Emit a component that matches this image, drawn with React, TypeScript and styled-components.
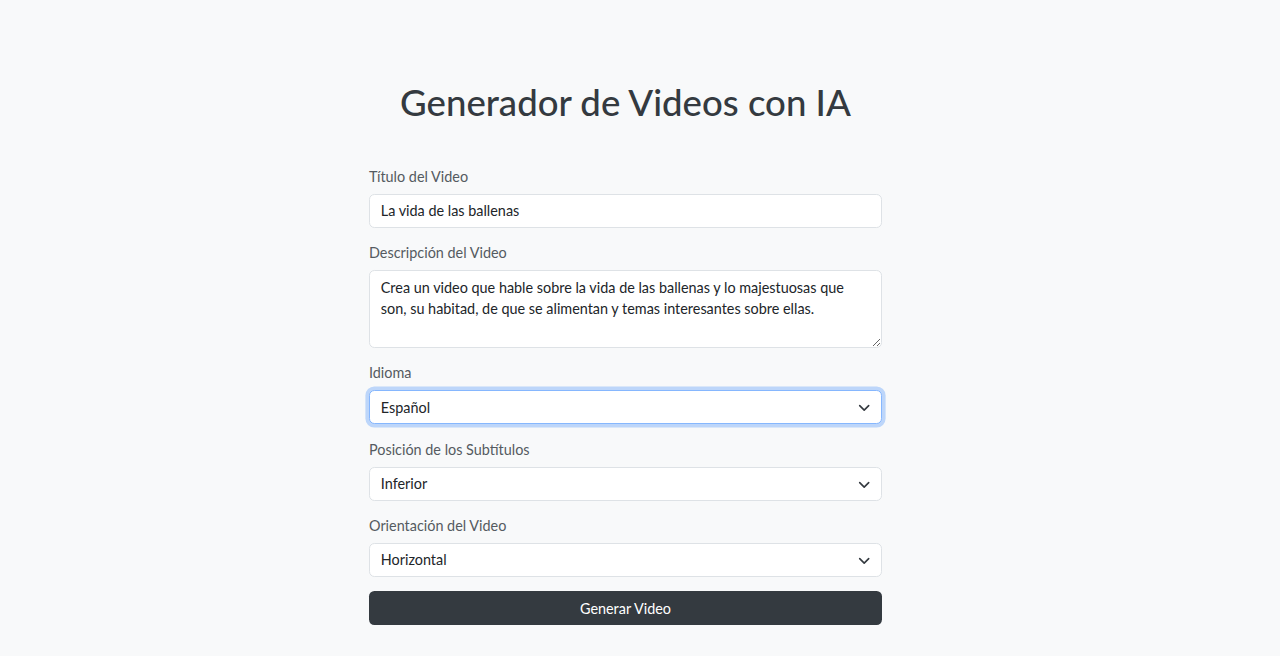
import React from 'react';
import styled, { createGlobalStyle, css } from 'styled-components';

/* Bootstrap-like form rendered at a 90% scale (1rem ≈ 14.4px). */

const GlobalStyle = createGlobalStyle`
  html, body {
    margin: 0;
    padding: 0;
    background: #f8f9fa;
  }
  body {
    font-family: Lato, "Noto Sans", "Liberation Sans", sans-serif;
    font-size: 14.4px;
    line-height: 1.5;
    color: #212529;
  }
  * { box-sizing: border-box; }
`;

const Page = styled.main`
  min-height: 656px;
  display: flex;
  justify-content: center;
  padding: 81px 29px 0 0;
`;

const Panel = styled.div`
  width: 513px;
  display: flex;
  flex-direction: column;
`;

const Heading = styled.h1`
  margin: 0 0 41px;
  text-align: center;
  font-size: 36.6px;
  line-height: 1.2;
  font-weight: 500;
  color: #343a40;
`;

const Field = styled.div`
  display: flex;
  flex-direction: column;
  margin-bottom: 14.4px;
`;

const Label = styled.label`
  margin-bottom: 7px;
  color: #555b61;
  line-height: 21px;
`;

const controlBase = css<{ $focused?: boolean }>`
  width: 100%;
  font: inherit;
  color: #212529;
  background: #fff;
  border: 1px solid #dee2e6;
  border-radius: 5.4px;
  padding: 5.4px 10.8px;
  line-height: 21.6px;
  outline: none;
  ${(p) =>
    p.$focused &&
    css`
      border-color: #86b7fe;
      box-shadow: 0 0 0 3.6px rgba(13, 110, 253, 0.25);
    `}
`;

const TextInput = styled.input`
  ${controlBase}
  height: 34px;
`;

const TextArea = styled.textarea`
  ${controlBase}
  height: 77.6px;
  resize: vertical;
  display: block;
`;

const SelectWrap = styled.div`
  position: relative;
`;

const Select = styled.select<{ $focused?: boolean }>`
  ${controlBase}
  height: 34px;
  appearance: none;
  -webkit-appearance: none;
  padding-right: 36px;
`;

const Chevron = styled.svg`
  position: absolute;
  right: 10.8px;
  top: 50%;
  width: 14.4px;
  height: 10.8px;
  transform: translateY(-50%);
  pointer-events: none;
`;

const SubmitButton = styled.button`
  height: 34px;
  width: 100%;
  border: none;
  border-radius: 5.4px;
  background: #343a40;
  color: #fff;
  font: inherit;
  cursor: pointer;
`;

const ChevronIcon = () => (
  <Chevron viewBox="0 0 16 12">
    <path
      d="m3 4.5 5 5 5-5"
      fill="none"
      stroke="#343a40"
      strokeWidth="1.8"
      strokeLinecap="round"
      strokeLinejoin="round"
    />
  </Chevron>
);

interface SelectFieldProps {
  label: string;
  options: string[];
  focused?: boolean;
}

const SelectField: React.FC<SelectFieldProps> = ({ label, options, focused }) => (
  <Field>
    <Label>{label}</Label>
    <SelectWrap>
      <Select $focused={focused} defaultValue={options[0]}>
        {options.map((o) => (
          <option key={o}>{o}</option>
        ))}
      </Select>
      <ChevronIcon />
    </SelectWrap>
  </Field>
);

export default function App() {
  return (
    <>
      <GlobalStyle />
      <Page>
        <Panel>
          <Heading>Generador de Videos con IA</Heading>

          <Field>
            <Label>Título del Video</Label>
            <TextInput defaultValue="La vida de las ballenas" />
          </Field>

          <Field>
            <Label>Descripción del Video</Label>
            <TextArea
              rows={3}
              defaultValue="Crea un video que hable sobre la vida de las ballenas y lo majestuosas que son, su habitad, de que se alimentan y temas interesantes sobre ellas."
            />
          </Field>

          <SelectField label="Idioma" options={['Español', 'English']} focused />
          <SelectField label="Posición de los Subtítulos" options={['Inferior', 'Superior', 'Centro']} />
          <SelectField label="Orientación del Video" options={['Horizontal', 'Vertical']} />

          <SubmitButton type="button">Generar Video</SubmitButton>
        </Panel>
      </Page>
    </>
  );
}
